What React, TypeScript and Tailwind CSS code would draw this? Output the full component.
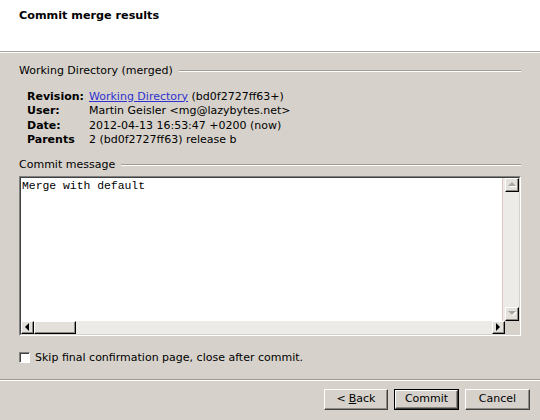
import React from "react";

/* ================= SMALL PIECES ================= */

function GroupTitle({ label }: { label: string }) {
  return (
    <div className="flex items-center h-[14px]">
      <span className="leading-[14px] whitespace-nowrap">{label}</span>
      <div className="ml-[6px] flex-1 h-[2px] border-t border-t-[#a09c95] border-b border-b-white" />
    </div>
  );
}

type Dir = "up" | "down" | "left" | "right";

function Arrow({ dir, disabled }: { dir: Dir; disabled?: boolean }) {
  const fill = disabled ? "#a9a6a0" : "#000";
  if (dir === "up" || dir === "down") {
    const pts = dir === "up" ? "0,4 4,0 8,4" : "0,0 8,0 4,4";
    return (
      <svg width="9" height="5" viewBox="0 0 9 5">
        {disabled && <polygon points={pts} fill="#fff" transform="translate(1,1)" />}
        <polygon points={pts} fill={fill} />
      </svg>
    );
  }
  const pts = dir === "right" ? "0,0 4,4 0,8" : "4,0 0,4 4,8";
  return (
    <svg width="5" height="9" viewBox="0 0 5 9">
      <polygon points={pts} fill={fill} />
    </svg>
  );
}

function ScrollBtn({ dir, disabled, w }: { dir: Dir; disabled?: boolean; w: string }) {
  return (
    <div
      className={`${w} shrink-0 flex items-center justify-center bg-[#e4e1dc] border border-t-white border-l-white border-r-black border-b-black shadow-[inset_-1px_-1px_#8d8a84]`}
    >
      <Arrow dir={dir} disabled={disabled} />
    </div>
  );
}

function Button({
  children,
  width,
  isDefault,
}: {
  children: React.ReactNode;
  width: string;
  isDefault?: boolean;
}) {
  const face = (
    <div className="flex-1 flex items-center justify-center bg-[#d6d2cb] border border-t-white border-l-white border-r-[#404040] border-b-[#404040] shadow-[inset_-1px_-1px_#8d8a84] leading-[14px]">
      {children}
    </div>
  );
  return (
    <div className={`${width} h-[21px] flex ${isDefault ? "border border-black" : ""}`}>
      {face}
    </div>
  );
}

/* ================= DIALOG ================= */

const INFO = [
  { label: "Revision:", value: "link" },
  { label: "User:", value: "Martin Geisler <mg@lazybytes.net>" },
  { label: "Date:", value: "2012-04-13 16:53:47 +0200 (now)" },
  { label: "Parents", value: "2 (bd0f2727ff63) release b" },
];

export default function App() {
  return (
    <div className="w-[540px] h-[420px] flex flex-col bg-[#d6d2cb] text-[11px] text-black font-['DejaVu_Sans','Bitstream_Vera_Sans',sans-serif] overflow-hidden">
      {/* HEADER */}
      <div className="h-[52px] shrink-0 bg-white border-b border-b-[#a6a39d] pl-[19px] pt-[8px]">
        <h1 className="font-bold text-[11.2px] leading-[15px]">Commit merge results</h1>
      </div>

      {/* BODY */}
      <div className="border-t border-t-white pt-[11px] pl-[19px] pr-[19px]">
        <GroupTitle label="Working Directory (merged)" />

        <div className="mt-[11.5px] ml-[8px] grid grid-cols-[62px_1fr] leading-[14.6px]">
          {INFO.map((row) => (
            <React.Fragment key={row.label}>
              <span className="font-bold">{row.label}</span>
              <span className="whitespace-nowrap">
                {row.value === "link" ? (
                  <>
                    <span className="text-[#3030d0] underline">Working Directory</span> (bd0f2727ff63+)
                  </>
                ) : (
                  row.value
                )}
              </span>
            </React.Fragment>
          ))}
        </div>

        <div className="mt-[10px]">
          <GroupTitle label="Commit message" />
        </div>

        {/* MESSAGE EDITOR */}
        <div className="mt-[4px] h-[160px] border border-t-[#808080] border-l-[#808080] border-r-white border-b-white flex">
          <div className="flex-1 flex flex-col border border-t-[#404040] border-l-[#404040] border-r-[#d6d2cb] border-b-[#d6d2cb]">
            <div className="flex-1 flex min-h-0">
              <div className="flex-1 bg-white border-r border-r-[#e2c6c6] px-[1px] font-['Liberation_Mono',monospace] text-[11.4px] leading-[14px] pt-[1px]">
                Merge with default
              </div>
              <div className="w-[2px] bg-[#edebe7]" />
              <div className="w-[14px] flex flex-col bg-[#edebe7]">
                <ScrollBtn dir="up" disabled w="h-[14px]" />
                <div className="flex-1" />
                <ScrollBtn dir="down" disabled w="h-[14px]" />
              </div>
            </div>
            <div className="h-[13px] flex bg-[#edebe7]">
              <ScrollBtn dir="left" w="w-[13px]" />
              <div className="w-[42px] bg-[#e4e1dc] border border-t-white border-l-white border-r-black border-b-black shadow-[inset_-1px_-1px_#8d8a84]" />
              <div className="flex-1" />
              <ScrollBtn dir="right" w="w-[13px]" />
              <div className="w-[14px] bg-[#d6d2cb]" />
            </div>
          </div>
        </div>

        {/* SKIP OPTION */}
        <div className="mt-[15px] h-[14px] flex items-center">
          <div className="w-[11px] h-[11px] bg-white border border-t-[#808080] border-l-[#808080] border-r-white border-b-white shadow-[inset_1px_1px_#404040]" />
          <span className="ml-[5px] leading-[14px]">Skip final confirmation page, close after commit.</span>
        </div>
      </div>

      {/* FOOTER */}
      <div className="mt-[14px] h-[2px] border-t border-t-[#a09c95] border-b border-b-white" />
      <div className="mt-[8px] flex justify-end gap-[6px] pr-[10px]">
        <Button width="w-[64px]">
          &lt; <span className="underline ml-[3px]">B</span>ack
        </Button>
        <Button width="w-[65px]" isDefault>
          Commit
        </Button>
        <Button width="w-[65px]">Cancel</Button>
      </div>
    </div>
  );
}
